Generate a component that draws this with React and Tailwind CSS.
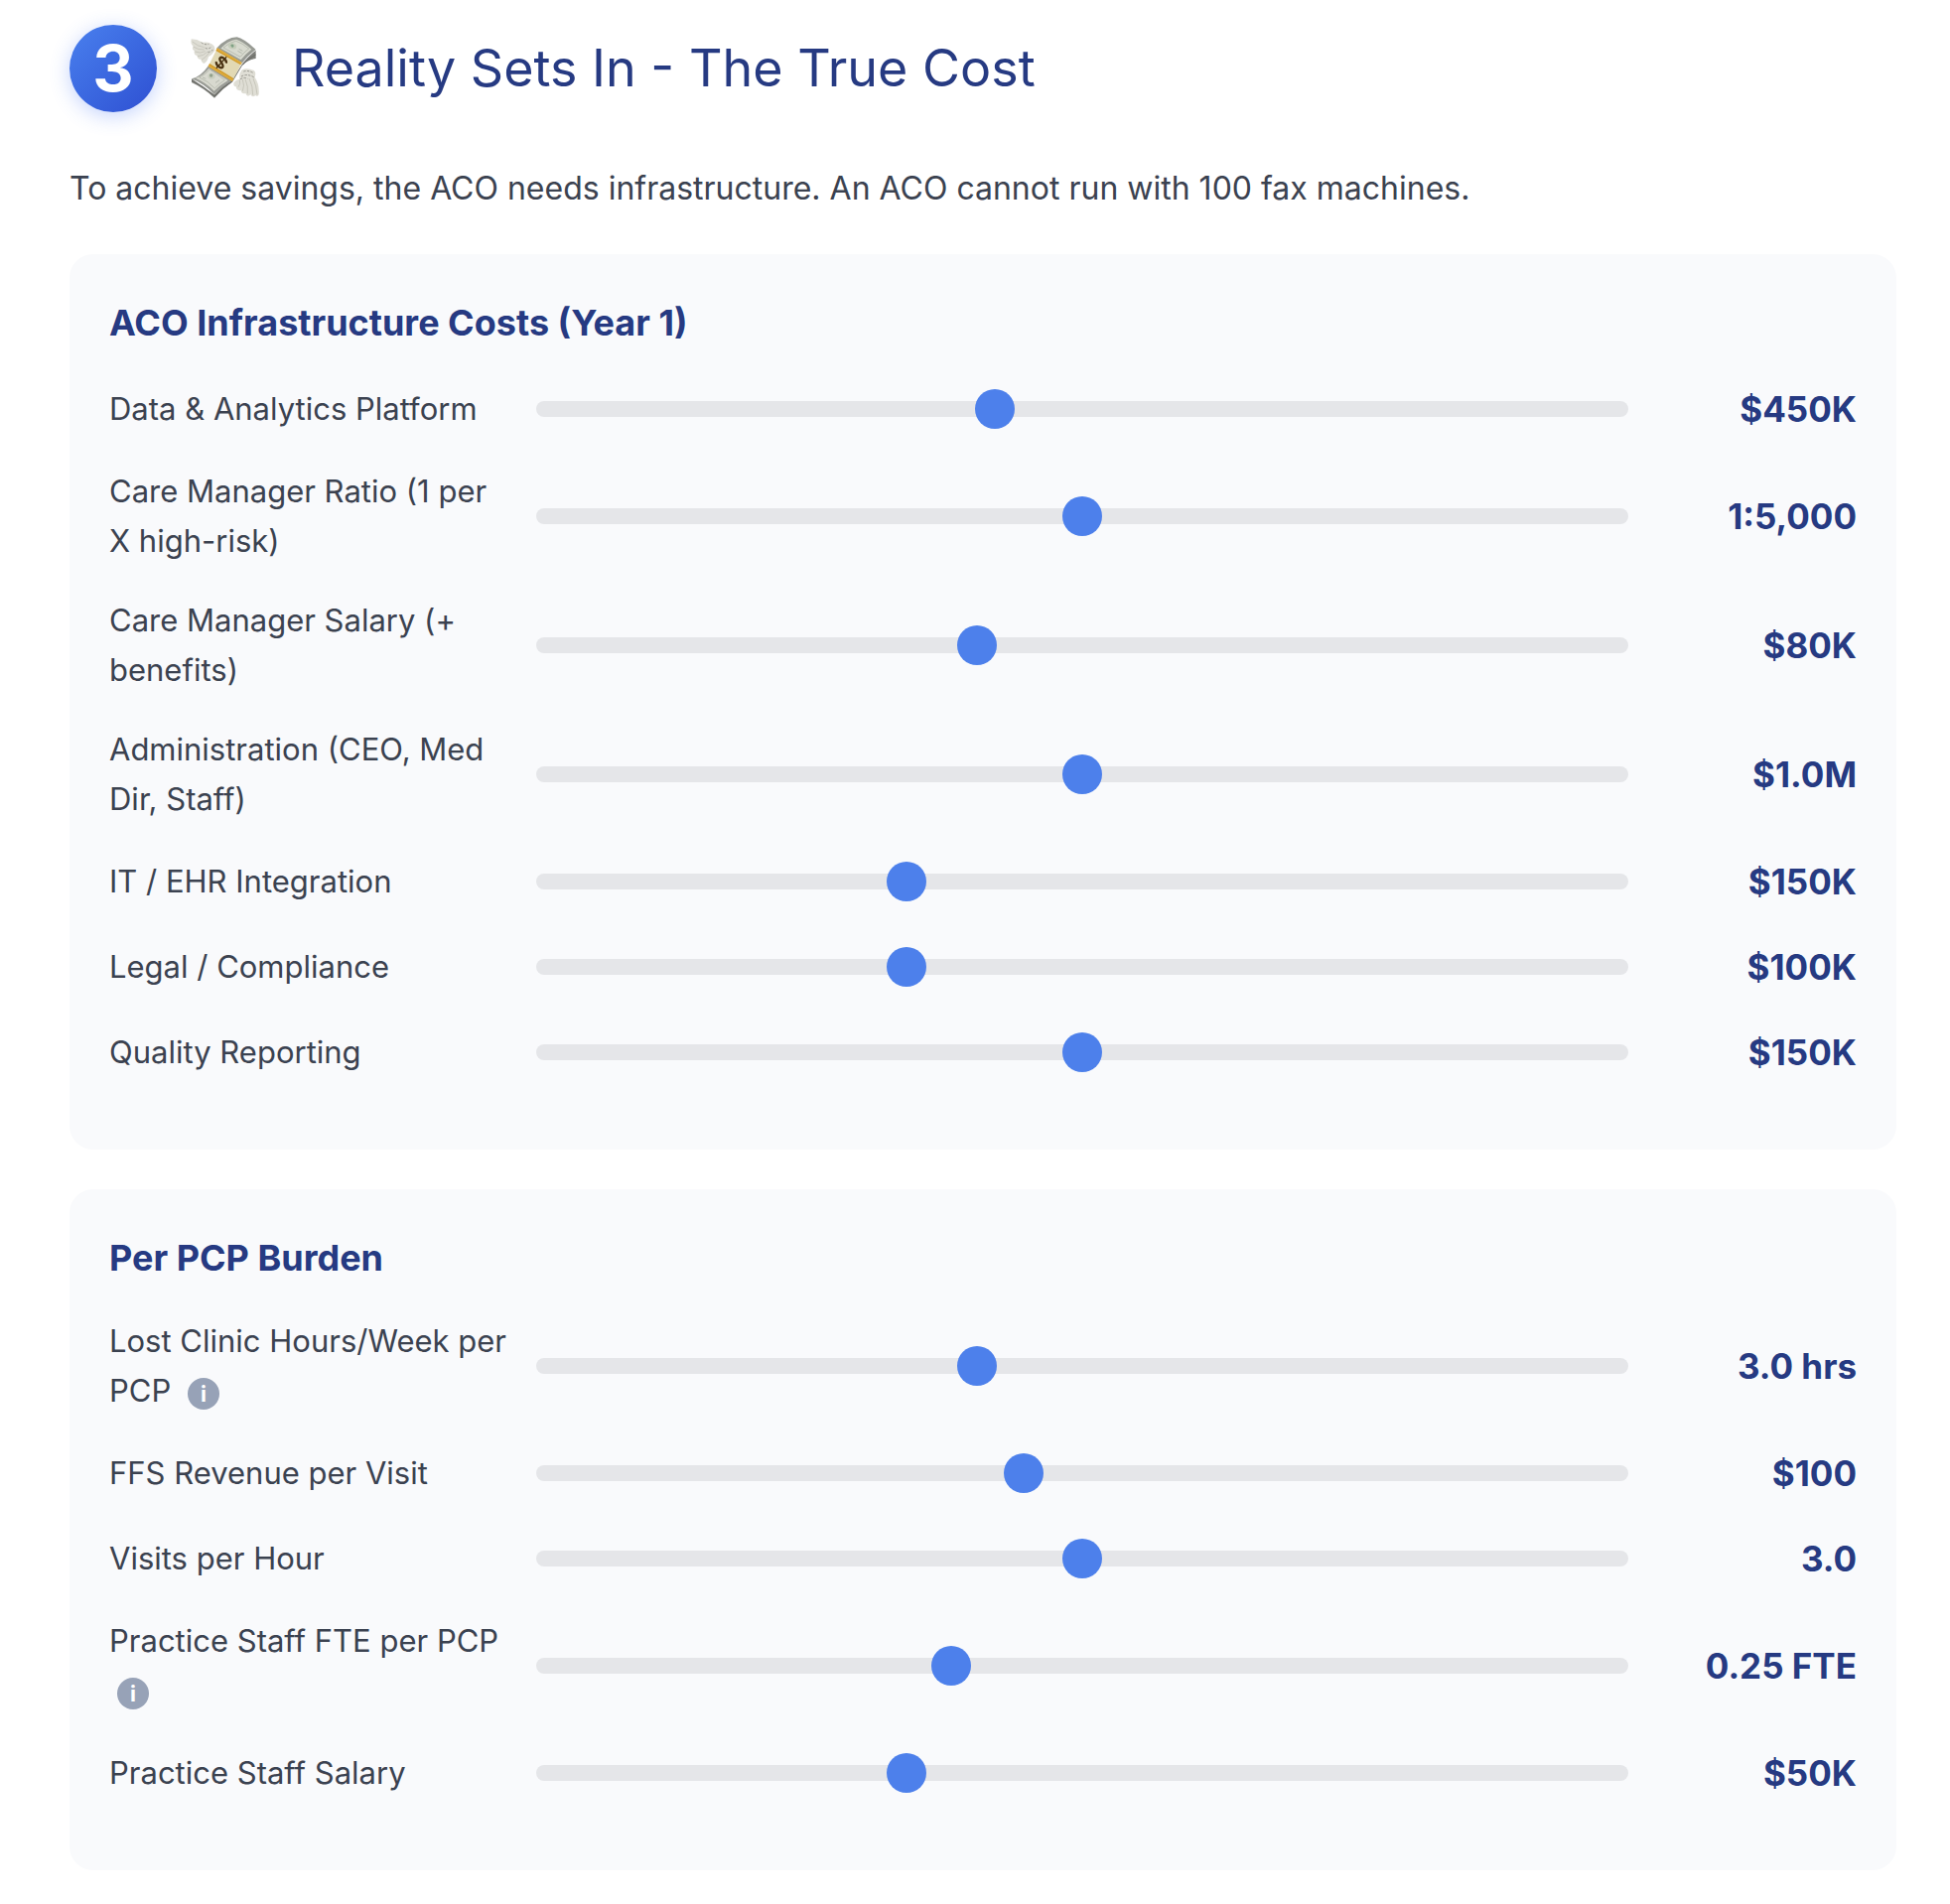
import React, { useState } from 'react';

const infrastructureCosts = [
  { id: 'platform', label: 'Data & Analytics Platform', min: 200, max: 800, step: 10, value: 450, format: (v) => `$${v}K` },
  { id: 'ratio', label: 'Care Manager Ratio (1 per X high-risk)', min: 2000, max: 8000, step: 500, value: 5000, format: (v) => `1:${v.toLocaleString('en-US')}` },
  { id: 'cm-salary', label: 'Care Manager Salary (+ benefits)', min: 60, max: 110, step: 5, value: 80, format: (v) => `$${v}K` },
  { id: 'admin', label: 'Administration (CEO, Med Dir, Staff)', min: 500, max: 1500, step: 50, value: 1000, format: (v) => `$${(v / 1000).toFixed(1)}M` },
  { id: 'it', label: 'IT / EHR Integration', min: 50, max: 350, step: 10, value: 150, format: (v) => `$${v}K` },
  { id: 'legal', label: 'Legal / Compliance', min: 50, max: 200, step: 10, value: 100, format: (v) => `$${v}K` },
  { id: 'quality', label: 'Quality Reporting', min: 50, max: 250, step: 10, value: 150, format: (v) => `$${v}K` },
];

const pcpBurden = [
  { id: 'hours', label: 'Lost Clinic Hours/Week per PCP', info: true, min: 1, max: 6, step: 0.5, value: 3, format: (v) => `${v.toFixed(1)} hrs` },
  { id: 'ffs', label: 'FFS Revenue per Visit', min: 60, max: 150, step: 5, value: 100, format: (v) => `$${v}` },
  { id: 'visits', label: 'Visits per Hour', min: 2, max: 4, step: 0.5, value: 3, format: (v) => v.toFixed(1) },
  { id: 'fte', label: 'Practice Staff FTE per PCP', info: true, min: 0.1, max: 0.5, step: 0.05, value: 0.25, format: (v) => `${v.toFixed(2)} FTE` },
  { id: 'staff-salary', label: 'Practice Staff Salary', min: 40, max: 70, step: 5, value: 50, format: (v) => `$${v}K` },
];

const MoneyWithWings = () => (
  <svg viewBox="24 33 228 228" className="size-[76px] shrink-0" aria-hidden="true">
    {/* Thickness of the stack */}
    <path d="M39 178 L108 226 Q134 196 160 184 L192 133 Q212 108 233 92 L233 117 Q208 121 192 138 L163 187 Q134 207 108 236 Q74 205 39 189 Z" fill="#7d7e79" />
    <path d="M39 183 Q76 199 108 231 Q135 202 162 186 M194 136 Q212 114 233 105" fill="none" stroke="#62645f" strokeWidth="2" />
    {/* Note faces */}
    <path d="M39 178 Q67 172 90 138 L162 184 Q134 197 108 226 Q78 194 39 178 Z" fill="#9a9c96" />
    <path d="M51 176 Q74 169 91 147 L149 183 Q126 196 107 215 Q83 190 51 176 Z" fill="#d8d9cf" />
    <path d="M114 86 Q144 53 176 52 Q198 57 233 90 Q208 108 191 131 Z" fill="#989b94" />
    <path d="M127 86 Q149 62 174 59 Q194 65 220 89 Q202 103 188 121 Z" fill="#d8dacf" />
    <path d="M62 174 Q81 165 94 150 L139 182 Q122 193 109 207 Q89 185 62 174 Z M135 84 Q154 67 173 64 Q192 70 212 87 Q197 98 186 112 Z" fill="none" stroke="#a9ada1" strokeWidth="2" />
    <ellipse cx="162" cy="79" rx="13" ry="9" transform="rotate(18 162 79)" fill="#c5ccba" />
    <path d="M157 76 q5 -5 9 0 q3 5 -3 8 q-6 -1 -6 -8" fill="#7fa184" />
    <ellipse cx="99" cy="170" rx="11" ry="9" fill="#c9cebf" />
    <circle cx="98" cy="168" r="5" fill="#91a08a" />
    <path d="M178 94 l13 7 M182 88 l11 6 M111 190 l12 -8 M72 174 l10 4" stroke="#a2a89b" strokeWidth="2" />
    {/* Paper band */}
    <path d="M117 85 L191 129 L162 185 L89 141 Z" fill="#e2d9b4" />
    <path d="M117 85 L191 129 L187 136 L112 93 Z M93 132 L166 177 L162 186 L89 141 Z" fill="#d29b28" />
    <path d="M116 88 L190 132 M91 138 L163 182" stroke="#efc258" strokeWidth="2" />
    <g transform="translate(129 129) rotate(42)" fill="none" stroke="#4a3212">
      <path d="M12 -8 C8 -17 -12 -17 -12 -7 C-12 2 12 -2 12 8 C12 17 -9 17 -13 8" strokeWidth="7" />
      <path d="M0 -23 V23" strokeWidth="4" />
    </g>
    {/* Left wing */}
    <path d="M38 58 Q55 58 72 68 Q94 65 106 78 Q111 84 109 93 Q101 105 90 112 Q86 129 75 132 Q68 128 67 119 Q57 120 55 108 Q45 106 47 93 Q38 88 44 80 Q35 74 38 58 Z" fill="#deddd4" />
    <path d="M41 66 Q58 81 77 83 M44 81 Q60 92 77 90 M49 96 Q66 103 80 95 M57 110 Q76 109 86 97 M69 121 Q83 113 92 99" fill="none" stroke="#bdbbb0" strokeWidth="2" />
    <path d="M68 68 Q78 77 91 73 M80 85 Q89 90 99 82 M88 97 Q98 98 105 88" fill="none" stroke="#77766e" strokeWidth="2" strokeDasharray="7 4" />
    {/* Right wing */}
    <path d="M191 151 Q207 143 227 153 Q235 158 230 173 Q245 196 242 226 Q238 234 232 228 Q223 236 217 226 Q207 236 202 222 Q190 226 188 213 Q175 216 173 202 Q163 201 167 189 Q173 180 184 179 Q181 163 191 151 Z" fill="#dfded5" />
    <path d="M225 177 Q235 199 237 226 M213 177 Q225 202 224 227 M201 179 Q211 202 208 223 M193 180 Q200 199 193 215 M184 181 Q188 194 180 203" fill="none" stroke="#bbb9ae" strokeWidth="2" />
    <path d="M196 156 Q209 151 227 161 M189 171 Q207 161 228 174 M186 179 Q199 172 208 178" fill="none" stroke="#74736b" strokeWidth="2" strokeDasharray="7 4" />
  </svg>
);

const SliderRow = ({ item }) => {
  const [value, setValue] = useState(item.value);

  return (
    <div className="grid grid-cols-[400px_1fr_200px] items-center gap-[30px]">
      <div className="text-[31px] leading-[50px] text-[#3b4250]">
        <label htmlFor={item.id}>{item.label}</label>
        {item.info && (
          <>
            {' '}
            <button
              type="button"
              aria-label={`About ${item.label}`}
              className="ml-2 inline-flex size-8 items-center justify-center rounded-full bg-[#97a2b7] align-middle text-[22px] leading-none font-bold text-white"
            >
              i
            </button>
          </>
        )}
      </div>
      <input
        id={item.id}
        type="range"
        min={item.min}
        max={item.max}
        step={item.step}
        value={value}
        onChange={(e) => setValue(Number(e.target.value))}
        className="h-4 w-full cursor-pointer appearance-none rounded-full bg-[#e5e6e9] outline-none [&::-webkit-slider-thumb]:size-10 [&::-webkit-slider-thumb]:appearance-none [&::-webkit-slider-thumb]:rounded-full [&::-webkit-slider-thumb]:bg-[#4d80eb]"
      />
      <output htmlFor={item.id} className="text-right text-[35px] leading-[56px] font-bold text-[#263a82]">
        {item.format(value)}
      </output>
    </div>
  );
};

const SliderCard = ({ title, items }) => (
  <section className="rounded-3xl bg-[#f9fafc] px-10 pt-10 pb-[70px]">
    <h3 className="mb-[30px] text-[36px] leading-[58px] font-bold text-[#263a82]">{title}</h3>
    <div className="flex flex-col gap-[30px]">
      {items.map((item) => (
        <SliderRow key={item.id} item={item} />
      ))}
    </div>
  </section>
);

const App = () => {
  return (
    <main className="bg-white pt-[25px] pr-[54px] pb-9 pl-[70px] font-[Inter,sans-serif]">
      <header className="mb-[50px] flex items-center gap-[30px]">
        <div className="flex size-[88px] shrink-0 items-center justify-center rounded-full bg-linear-135 from-[#4a80ee] to-[#2f4fd2] text-[64px] leading-none font-bold text-white shadow-[0_4px_20px_rgba(59,110,246,0.3)]">
          3
        </div>
        <MoneyWithWings />
        <h2 className="text-[52px] leading-[88px] text-[#263a82]">Reality Sets In - The True Cost</h2>
      </header>

      <p className="mb-[39px] text-[32px] leading-[54px] text-[#3b4250]">
        To achieve savings, the ACO needs infrastructure. An ACO cannot run with 100 fax machines.
      </p>

      <div className="flex flex-col gap-10">
        <SliderCard title="ACO Infrastructure Costs (Year 1)" items={infrastructureCosts} />
        <SliderCard title="Per PCP Burden" items={pcpBurden} />
      </div>
    </main>
  );
};

export default App;
